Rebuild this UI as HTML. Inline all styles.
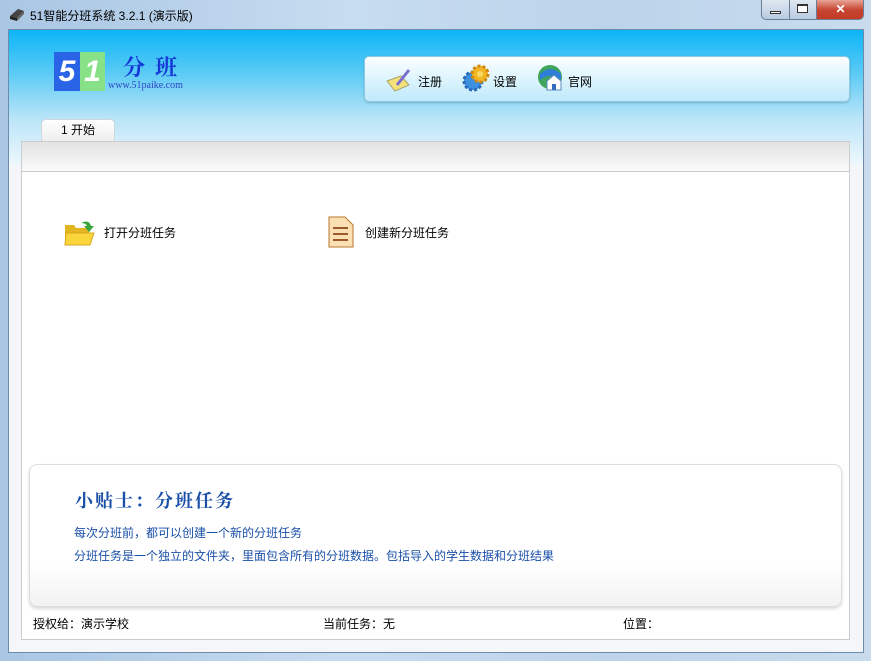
<!DOCTYPE html>
<html><head><meta charset="utf-8"><style>
*{margin:0;padding:0;box-sizing:border-box}
body{width:871px;height:661px;overflow:hidden;font-family:"Liberation Sans","Noto Sans CJK SC",sans-serif;font-size:12px;position:relative;background:linear-gradient(90deg,#a9c6e3,#c7dcf0 40%,#bcd3ea 70%,#c9dcee);}
.abs{position:absolute}
.title{left:30px;top:7px;font-size:12px;color:#000}
.client{left:8px;top:29px;width:856px;height:624px;border:1px solid #6d8bab;background:#f4f6f9;overflow:hidden}
.hdr{left:0;top:0;width:854px;height:135px;background:linear-gradient(#0db5f8 0%,#56c9f5 30%,#b9e4f8 65%,#eef8fd 100%)}
.tb{left:355px;top:26px;width:486px;height:46px;border:1px solid #8ec9e6;border-radius:5px;background:linear-gradient(#fbfeff,#bfeafb);box-shadow:0 1px 2px rgba(0,0,0,.2)}
.tbt{top:16px;font-size:12px}
.panel{left:12px;top:111px;width:829px;height:499px;background:#fff;border:1px solid #ccc}
.tip{left:7px;top:322px;width:813px;height:143px;border:1px solid #ddd;border-radius:8px;background:linear-gradient(#fff,#fff 70%,#f2f2f2);box-shadow:0 2px 3px rgba(0,0,0,.15)}
.blue{color:#1a4fa8}
</style></head><body>
<svg class="abs" style="left:8px;top:6px" width="18" height="16"><path d="M2 10 L10 3 L16 5 L9 12 Z" fill="#444"/><path d="M2 10 L9 12 L9 15 L2 13Z" fill="#222"/><path d="M9 12 L16 5 L16 8 L9 15Z" fill="#666"/></svg>
<div class="abs title">51智能分班系统 3.2.1 (演示版)</div>
<div class="abs" style="left:761px;top:0;width:103px;height:20px;border:1px solid #6a7e95;border-top:none;border-radius:0 0 5px 5px;background:linear-gradient(#dfe8f2,#b9cbe0);overflow:hidden">
<div class="abs" style="left:27px;top:0;width:1px;height:20px;background:#6a7e95"></div>
<div class="abs" style="left:54px;top:0;width:48px;height:20px;background:linear-gradient(#e8a496,#c74532 50%,#c23a24);border-left:1px solid #6a7e95;color:#fff;text-align:center;font-weight:bold;font-size:12px;line-height:19px">✕</div>
<div class="abs" style="left:8px;top:11px;width:11px;height:3px;border:1px solid #333;background:#fff"></div>
<div class="abs" style="left:35px;top:4px;width:11px;height:9px;border:1px solid #333;border-top-width:2px;background:#fff"></div>
</div>
<div class="abs client">
<div class="abs hdr"></div>
<div class="abs" style="left:45px;top:22px;width:26px;height:39px;background:#2a64e6;color:#fff;font:bold italic 30px 'Liberation Sans';text-align:center;line-height:39px">5</div>
<div class="abs" style="left:71px;top:22px;width:25px;height:39px;background:#87e187;color:#fff;font:bold italic 30px 'Liberation Sans';text-align:center;line-height:39px">1</div>
<div class="abs" style="left:114px;top:21px;font:bold 22px 'Noto Serif CJK SC',serif;color:#1636d8;letter-spacing:10px">分班</div>
<div class="abs" style="left:99px;top:50px;font:10px 'Liberation Serif',serif;color:#2c46c4">www.51paike.com</div>
<div class="abs tb">
<svg class="abs" style="left:20px;top:10px" width="28" height="26"><path d="M2 14 L16 9 L24 18 L10 24Z" fill="#f3e27a" stroke="#a9a36a"/><path d="M12 18 L24 3" stroke="#7a6fd0" stroke-width="3"/></svg>
<div class="abs tbt" style="left:53px">注册</div>
<svg class="abs" style="left:96px;top:6px" width="30" height="30"><circle cx="12" cy="18" r="9" fill="#3d8fe0" stroke="#2a6ab8" stroke-width="3" stroke-dasharray="3 2"/><circle cx="19" cy="11" r="8" fill="#f2b623" stroke="#d08810" stroke-width="3" stroke-dasharray="3 2"/><circle cx="19" cy="11" r="3" fill="#f7d96a"/></svg>
<div class="abs tbt" style="left:128px">设置</div>
<svg class="abs" style="left:172px;top:7px" width="28" height="28"><circle cx="13" cy="13" r="12" fill="#3fa55a"/><path d="M3 10 Q13 0 24 10 L24 16 Q13 8 3 16Z" fill="#2f7ed8"/><path d="M10 17 L17 11 L24 17 L24 26 L10 26Z" fill="#fff" stroke="#5a8ac0"/><rect x="15" y="20" width="4" height="6" fill="#2f6ec0"/></svg>
<div class="abs tbt" style="left:203px">官网</div>
</div>
<div class="abs" style="left:32px;top:89px;width:74px;height:24px;border:1px solid #cfd6dc;border-bottom:none;border-radius:5px 5px 0 0;background:linear-gradient(#fff,#ececec);text-align:center;line-height:20px">1 开始</div>
<div class="abs panel">
<div class="abs" style="left:0;top:0;width:827px;height:29px;background:linear-gradient(#e3e3e3,#fafafa)"></div>
<div class="abs" style="left:0;top:29px;width:827px;height:1px;background:#c8c8c8"></div>
<svg class="abs" style="left:41px;top:75px" width="34" height="30"><path d="M2 8 L11 8 L13 11 L26 11 L26 27 L2 27Z" fill="#e4b520"/><path d="M3 16 L31 16 L27 28 L2 28Z" fill="#fbd53c" stroke="#d9a71b"/><path d="M18 6 Q26 2 28 9 L31 9 L26 15 L21 9 L24 9 Q23 6 18 6Z" fill="#3aa53a"/></svg>
<div class="abs" style="left:82px;top:82px">打开分班任务</div>
<svg class="abs" style="left:306px;top:74px" width="26" height="32"><path d="M1 1 L17 1 L25 9 L25 31 L1 31Z" fill="#fbe0b4" stroke="#b9772f"/><path d="M5 12 H20 M5 18 H20 M5 24 H20" stroke="#9a5a2a" stroke-width="2"/></svg>
<div class="abs" style="left:343px;top:82px">创建新分班任务</div>
<div class="abs tip">
<div class="abs blue" style="left:45px;top:22px;font:bold 18px 'Noto Serif CJK SC',serif;letter-spacing:2px">小贴士：分班任务</div>
<div class="abs blue" style="left:44px;top:59px">每次分班前，都可以创建一个新的分班任务</div>
<div class="abs blue" style="left:44px;top:82px">分班任务是一个独立的文件夹，里面包含所有的分班数据。包括导入的学生数据和分班结果</div>
</div>
<div class="abs" style="left:11px;top:473px">授权给：演示学校</div>
<div class="abs" style="left:301px;top:473px">当前任务：无</div>
<div class="abs" style="left:601px;top:473px">位置：</div>
</div>
</div>
</body></html>
